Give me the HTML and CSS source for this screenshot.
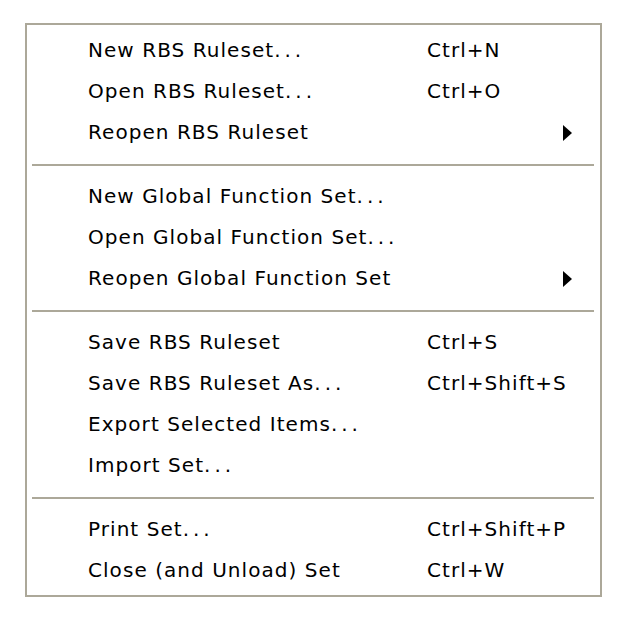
FILE: index.html
```
<!DOCTYPE html>
<html lang="en">
<head>
<meta charset="utf-8">
<title>File menu</title>
<link rel="stylesheet" href="styles.css">
</head>
<body>

<div class="menu">
  <div class="item"><span class="label">New RBS Ruleset<span class="dots">...</span></span><span class="key">Ctrl+N</span></div>
  <div class="item"><span class="label">Open RBS Ruleset<span class="dots">...</span></span><span class="key">Ctrl+O</span></div>
  <div class="item"><span class="label">Reopen RBS Ruleset</span><span class="key"></span><span class="arrow"></span></div>
  <div class="sep"></div>
  <div class="item"><span class="label">New Global Function Set<span class="dots">...</span></span><span class="key"></span></div>
  <div class="item"><span class="label">Open Global Function Set<span class="dots">...</span></span><span class="key"></span></div>
  <div class="item"><span class="label">Reopen Global Function Set</span><span class="key"></span><span class="arrow"></span></div>
  <div class="sep"></div>
  <div class="item"><span class="label">Save RBS Ruleset</span><span class="key">Ctrl+S</span></div>
  <div class="item"><span class="label">Save RBS Ruleset As<span class="dots">...</span></span><span class="key">Ctrl+Shift+S</span></div>
  <div class="item"><span class="label">Export Selected Items<span class="dots">...</span></span><span class="key"></span></div>
  <div class="item"><span class="label">Import Set<span class="dots">...</span></span><span class="key"></span></div>
  <div class="sep"></div>
  <div class="item"><span class="label">Print Set<span class="dots">...</span></span><span class="key">Ctrl+Shift+P</span></div>
  <div class="item"><span class="label">Close (and Unload) Set</span><span class="key">Ctrl+W</span></div>
</div>

</body>
</html>
```

FILE: styles.css
```
body {
    margin: 0;
    background: #fff;
    font-family: "DejaVu Sans", Verdana, sans-serif;
    font-size: 20px;
    color: #000;
}
.menu {
    box-sizing: border-box;
    width: 577px;
    height: 574px;
    margin: 23px 0 0 25px;
    border: 2px solid #aca899;
    padding: 5px 0 4px 0;
    background: #fff;
}
.item {
    display: flex;
    align-items: center;
    height: 41px;
    line-height: 41px;
    padding-left: 61px;
    letter-spacing: 1.05px;
    white-space: nowrap;
}
.label {
    width: 339px;
}
.dots {
    letter-spacing: 4px;
}
.key {
    flex: 1;
}
.arrow {
    width: 0;
    height: 0;
    border-left: 9px solid #000;
    border-top: 8px solid transparent;
    border-bottom: 8px solid transparent;
    margin-right: 28px;
}
.sep {
    height: 2px;
    margin: 11px 6px 10px 5px;
    background: #aca899;
}
```
